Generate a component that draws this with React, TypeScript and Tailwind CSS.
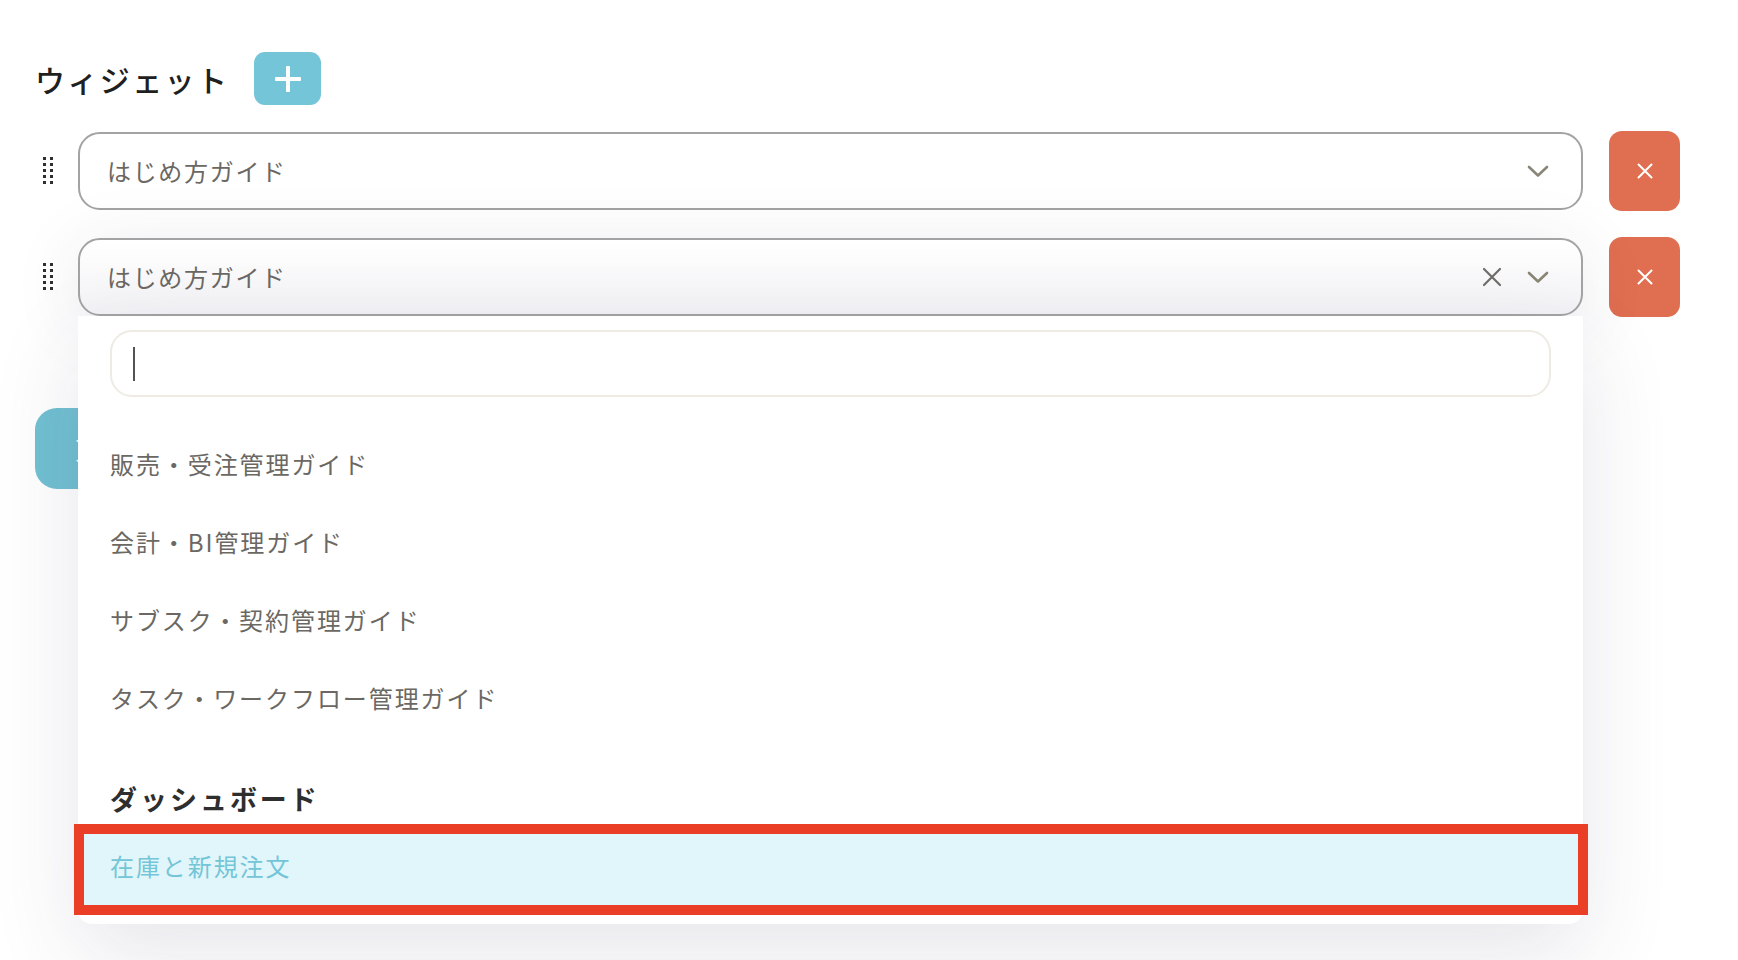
import React from "react";

const font = { fontFamily: '"Noto Sans CJK JP", "Noto Sans", sans-serif' };

function DragHandle() {
  const dots = [];
  for (let r = 0; r < 5; r++) {
    for (let c = 0; c < 2; c++) {
      dots.push(<rect key={`${r}-${c}`} x={c * 7} y={r * 6} width="3" height="3" fill="#2f2f2f" />);
    }
  }
  return (
    <svg width="10" height="28" viewBox="0 0 10 28">
      {dots}
    </svg>
  );
}

function Chevron() {
  return (
    <svg width="22" height="13" viewBox="0 0 22 13" fill="none">
      <path d="M2 2 L11 10.5 L20 2" stroke="#8a8677" strokeWidth="2.6" strokeLinecap="round" strokeLinejoin="round" />
    </svg>
  );
}

function ClearX() {
  return (
    <svg width="20" height="20" viewBox="0 0 20 20" fill="none">
      <path d="M2 2 L18 18 M18 2 L2 18" stroke="#6f6d68" strokeWidth="2.2" strokeLinecap="round" />
    </svg>
  );
}

function DeleteButton() {
  return (
    <button className="flex h-[80px] w-[71px] shrink-0 items-center justify-center rounded-[13px] bg-[#e06e50]">
      <svg width="16" height="16" viewBox="0 0 16 16" fill="none">
        <path d="M1.5 1.5 L14.5 14.5 M14.5 1.5 L1.5 14.5" stroke="#ffffff" strokeWidth="2" strokeLinecap="round" />
      </svg>
    </button>
  );
}

const options = [
  "販売・受注管理ガイド",
  "会計・BI管理ガイド",
  "サブスク・契約管理ガイド",
  "タスク・ワークフロー管理ガイド",
];

export default function App() {
  return (
    <div className="min-h-[960px] w-full overflow-hidden bg-white" style={font}>
      <div className="pl-[35px] pr-[58px] pt-[52px]">
        {/* Title */}
        <div className="flex items-center">
          <h2 className="text-[30px] font-medium leading-[40px] tracking-[0.08em] text-[#1f1f1f]">ウィジェット</h2>
          <button className="ml-[25px] flex h-[53px] w-[67px] items-center justify-center rounded-[11px] bg-[#74c5d7]">
            <svg width="26" height="26" viewBox="0 0 26 26" fill="none">
              <path d="M13 1.5 V24.5 M1.5 13 H24.5" stroke="#ffffff" strokeWidth="4" strokeLinecap="round" />
            </svg>
          </button>
        </div>

        {/* Row 1 */}
        <div className="mt-[26px] flex items-center">
          <div className="flex w-[43px] shrink-0 pl-[8px]">
            <DragHandle />
          </div>
          <div className="flex h-[78px] flex-1 items-center rounded-[22px] border-2 border-[#a3a3a3] bg-white pl-[27px] pr-[32px]">
            <span className="flex-1 text-[24px] tracking-[0.07em] text-[#6b6863]">はじめ方ガイド</span>
            <Chevron />
          </div>
          <div className="ml-[26px]">
            <DeleteButton />
          </div>
        </div>

        {/* Row 2 */}
        <div className="relative z-10 mt-[26px] flex items-center">
          <div className="flex w-[43px] shrink-0 pl-[8px]">
            <DragHandle />
          </div>
          <div className="relative flex-1">
            <div className="flex h-[78px] items-center rounded-[22px] border-2 border-[#a3a3a3] bg-gradient-to-b from-white to-[#f3f3f6] pl-[27px] pr-[32px] shadow-[0_10px_70px_rgba(50,50,90,0.10)]">
              <span className="flex-1 text-[24px] tracking-[0.07em] text-[#6b6863]">はじめ方ガイド</span>
              <ClearX />
              <div className="ml-[25px]">
                <Chevron />
              </div>
            </div>

            {/* Dropdown */}
            <div className="absolute left-0 right-0 top-full rounded-b-[14px] bg-white pb-[15px] shadow-[0_30px_90px_rgba(50,50,90,0.12)]">
              <div className="mx-[32px] mt-[14px] flex h-[67px] items-center rounded-[22px] border-2 border-[#eeeae4] bg-white pl-[21px]">
                <div className="h-[34px] w-[2px] bg-[#555350]" />
              </div>
              <div className="mt-[28px]">
                {options.map((o) => (
                  <div key={o} className="flex h-[78px] items-center pl-[32px] text-[24px] tracking-[0.08em] text-[#6b6863]">
                    {o}
                  </div>
                ))}
              </div>
              <div className="flex h-[92px] items-end pb-[12px] pl-[32px]">
                <span className="text-[27px] font-bold leading-[36px] tracking-[0.11em] text-[#2e2e2e]">ダッシュボード</span>
              </div>
              <div className="relative flex h-[80px] items-center bg-[#e1f6fb] pb-[6px] pl-[32px]">
                <span className="text-[24px] tracking-[0.08em] text-[#74c5d7]">在庫と新規注文</span>
                <div className="pointer-events-none absolute -bottom-[6px] -left-[4px] -right-[5px] -top-[5px] border-[10px] border-[#ea3e26]" />
              </div>
            </div>
          </div>
          <div className="ml-[26px]">
            <DeleteButton />
          </div>
        </div>

        {/* Button behind dropdown */}
        <div className="mt-[91px]">
          <button className="flex h-[81px] items-center rounded-[22px] bg-[#72c0d2] pl-[40px] pr-[40px] text-[24px] text-white">
            更新
          </button>
        </div>
      </div>
    </div>
  );
}
